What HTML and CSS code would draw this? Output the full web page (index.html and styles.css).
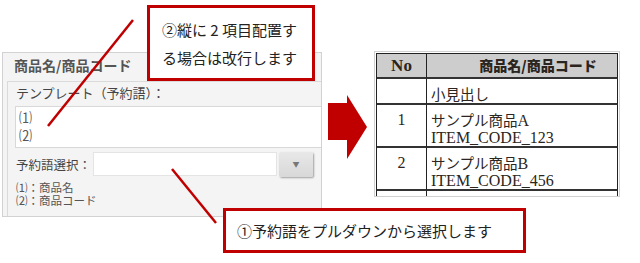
FILE: index.html
```html
<!DOCTYPE html>
<html lang="ja">

<head>
  <meta charset="UTF-8" />
  <meta name="viewport" content="width=device-width, initial-scale=1.0" />
  <title>予約語テンプレート</title>
  <link rel="stylesheet" href="styles.css">
</head>

<body>
  <div class="stage">
    <!-- 設定パネル -->
    <div class="panel">
      <div class="panel-title">商品名/商品コード</div>
      <div class="section">
        <div class="section-title">テンプレート（予約語）：</div>
        <div class="template">
          <p>⑴</p>
          <p>⑵</p>
        </div>
        <div class="select-row">
          <span class="select-label">予約語選択：</span>
          <span class="select-input"></span>
          <span class="select-btn">&#9660;</span>
        </div>
        <ul class="legend">
          <li>⑴：商品名</li>
          <li>⑵：商品コード</li>
        </ul>
      </div>
    </div>

    <!-- 矢印 -->
    <svg class="arrow" width="39" height="64" viewBox="0 0 39 64">
      <polygon points="0,8 19,8 19,0 39,32 19,64 19,45 0,45" fill="#c00000" />
    </svg>

    <!-- 出力イメージ -->
    <div class="doc">
      <table class="doc-table">
        <thead>
          <tr>
            <th class="col-no">No</th>
            <th class="col-name">商品名/商品コード</th>
          </tr>
        </thead>
        <tbody>
          <tr>
            <td class="col-no"></td>
            <td><span class="ja">小見出し</span></td>
          </tr>
          <tr class="item">
            <td class="col-no">1</td>
            <td><span class="ja">サンプル商品</span>A<br>ITEM_CODE_123</td>
          </tr>
          <tr class="item">
            <td class="col-no">2</td>
            <td><span class="ja">サンプル商品</span>B<br>ITEM_CODE_456</td>
          </tr>
          <tr class="item">
            <td class="col-no"></td>
            <td></td>
          </tr>
        </tbody>
      </table>
    </div>

    <!-- 引き出し線 -->
    <svg class="leaders" width="640" height="263" viewBox="0 0 640 263">
      <line x1="133" y1="20" x2="48" y2="126" />
      <line x1="172" y1="169" x2="216" y2="223" />
    </svg>

    <!-- 吹き出し -->
    <div class="note note-top">②縦に 2 項目配置す<br>る場合は改行します</div>
    <div class="note note-bottom">①予約語をプルダウンから選択します</div>
  </div>
</body>

</html>
```

FILE: styles.css
```css
* {
  box-sizing: border-box;
}

body {
  margin: 0;
  background: #fff;
  font-family: "Noto Sans CJK JP", "Noto Sans", sans-serif;
  color: #333;
}

.stage {
  position: relative;
  width: 640px;
  height: 263px;
  display: flex;
  align-items: flex-start;
  overflow: hidden;
}

/* 設定パネル */
.panel {
  margin: 52px 0 0 2px;
  width: 320px;
  height: 165px;
  border: 1px solid #d2d2d2;
  background: #f4f4f4;
  display: flex;
  flex-direction: column;
  overflow: hidden;
}

.panel-title {
  height: 28px;
  padding-left: 11px;
  font-size: 14px;
  font-weight: bold;
  line-height: 25px;
  color: #555;
}

.section {
  flex: 1;
  margin-left: 4px;
  padding-left: 7px;
  border: 1px solid #dadada;
  border-right: 0;
  border-bottom: 0;
}

.section-title {
  height: 24px;
  padding-left: 1px;
  font-size: 13px;
  line-height: 22px;
  color: #444;
  white-space: nowrap;
}

.template {
  height: 42px;
  padding: 1px 3px;
  background: #fff;
  border: 1px solid #d8d8d8;
  border-right: 0;
  font-size: 13px;
  line-height: 18px;
  color: #555;
}

.template p {
  margin: 0;
}

.select-row {
  margin-top: 3px;
  height: 26px;
  display: flex;
  align-items: center;
}

.select-label {
  flex: none;
  width: 78px;
  padding-left: 1px;
  font-size: 12.5px;
  color: #444;
  white-space: nowrap;
}

.select-input {
  flex: none;
  width: 184px;
  height: 24px;
  background: #fff;
  border: 1px solid #e4e4e4;
}

.select-btn {
  flex: none;
  margin-left: 2px;
  width: 34px;
  height: 25px;
  border-radius: 2px;
  background: linear-gradient(#e8e8e8, #d8d8d8);
  box-shadow: 1px 1px 2px rgba(0, 0, 0, 0.35);
  color: #777;
  font-size: 7px;
  line-height: 25px;
  text-align: center;
}

.legend {
  margin: 4px 0 0;
  padding: 0 0 0 1px;
  list-style: none;
  font-size: 11.5px;
  line-height: 13px;
  color: #555;
  white-space: nowrap;
}

/* 矢印 */
.arrow {
  margin: 95px 0 0 6px;
  flex: none;
}

/* 出力イメージ */
.doc {
  margin: 51px 0 0 7px;
  width: 246px;
  height: 146px;
  padding: 1px 1px 0 1px;
  border: 1px solid #d0d0d0;
  background: #fff;
  overflow: hidden;
  flex: none;
}

.doc-table {
  width: 100%;
  border-collapse: separate;
  border-spacing: 0;
  border-top: 1px solid #222;
  border-left: 1px solid #222;
  font-family: "Liberation Serif", "Noto Sans CJK JP", serif;
  font-size: 16px;
  color: #2a2520;
}

.doc-table .ja {
  font-family: "Noto Sans CJK JP", sans-serif;
  font-size: 14.5px;
}

.doc-table th,
.doc-table td {
  border-right: 1px solid #222;
  border-bottom: 2px solid #333;
  vertical-align: top;
  text-align: left;
}

.doc-table th {
  height: 25px;
  padding: 0;
  background: #cdcdcd;
  line-height: 23px;
  text-align: center;
}

.doc-table th.col-no {
  font-size: 17px;
}

.doc-table th.col-name {
  padding-left: 32px;
  font-family: "Noto Sans CJK JP", sans-serif;
  font-size: 14px;
  font-weight: 900;
}

.doc-table td {
  height: 25px;
  padding: 6px 4px 0;
  line-height: 17px;
}

.doc-table tr.item td {
  height: 42px;
}

.doc-table .col-no {
  width: 50px;
}

.doc-table td.col-no {
  text-align: center;
}

/* 引き出し線と吹き出し */
.leaders {
  position: absolute;
  left: 0;
  top: 0;
  pointer-events: none;
}

.leaders line {
  stroke: #c00000;
  stroke-width: 2.5;
}

.note {
  position: absolute;
  border: 3px solid #c00000;
  background: #fff;
  font-size: 15px;
  color: #222;
}

.note-top {
  left: 147px;
  top: 5px;
  width: 168px;
  height: 76px;
  padding: 8px 0 0 12px;
  line-height: 28px;
}

.note-bottom {
  left: 223px;
  top: 208px;
  width: 303px;
  height: 45px;
  padding-left: 11px;
  line-height: 39px;
}
```
